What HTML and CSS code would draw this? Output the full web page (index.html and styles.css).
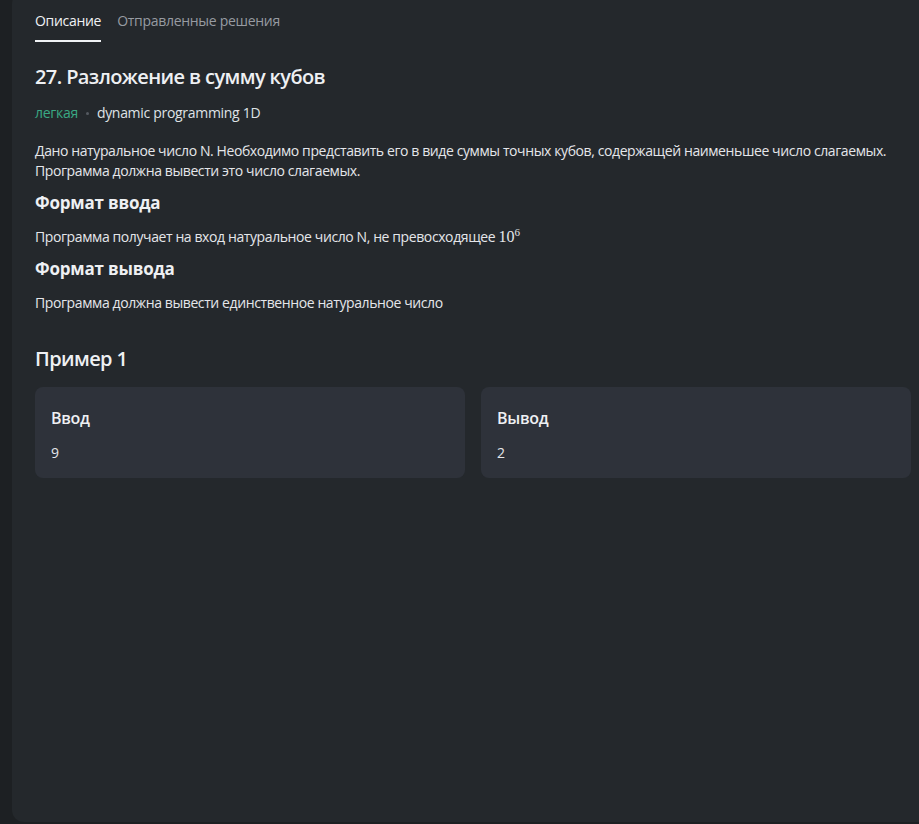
FILE: index.html
```html
<!DOCTYPE html>
<html lang="ru">
<head>
<meta charset="utf-8">
<link rel="stylesheet" href="styles.css">
</head>
<body>
<div class="panel">
  <nav class="tabs">
    <span class="tab active">Описание</span>
    <span class="tab">Отправленные решения</span>
  </nav>
  <h1 class="title">27. Разложение в сумму кубов</h1>
  <div class="tags">
    <span class="level">легкая</span>
    <span class="dot"></span>
    <span class="tag">dynamic programming 1D</span>
  </div>
  <p class="text intro">Дано натуральное число N. Необходимо представить его в виде суммы точных кубов, содержащей наименьшее число слагаемых. Программа должна вывести это число слагаемых.</p>
  <h2 class="section">Формат ввода</h2>
  <p class="text">Программа получает на вход натуральное число N, не превосходящее <span class="math">10<sup>6</sup></span></p>
  <h2 class="section">Формат вывода</h2>
  <p class="text">Программа должна вывести единственное натуральное число</p>
  <h2 class="example">Пример 1</h2>
  <div class="cards">
    <div class="card">
      <div class="card-title">Ввод</div>
      <div class="card-value">9</div>
    </div>
    <div class="card">
      <div class="card-title">Вывод</div>
      <div class="card-value">2</div>
    </div>
  </div>
</div>
</body>
</html>
```
FILE: styles.css
```css
html, body {
  margin: 0;
  padding: 0;
  background: #1d2023;
  height: 100%;
  overflow: hidden;
}
body {
  font-family: "Open Sans", "Noto Sans", sans-serif;
  color: #e4e6ea;
}
.panel {
  margin: -8px 0 0 12px;
  height: 830px;
  box-sizing: border-box;
  background: #24282c;
  border-radius: 12px 0 0 12px;
  padding: 19px 8px 0 23px;
}
.tabs {
  display: flex;
  gap: 16px;
  height: 31px;
}
.tab {
  font-size: 14px;
  line-height: 20px;
  color: #979ba2;
  letter-spacing: -0.3px;
  height: 20px;
  padding-bottom: 9px;
}
.tab.active {
  color: #f0f2f5;
  border-bottom: 2px solid #f0f2f5;
}
.title {
  margin: 21px 0 0;
  font-size: 20px;
  line-height: 28px;
  font-weight: 600;
  letter-spacing: -0.6px;
  color: #eef0f3;
}
.tags {
  display: flex;
  align-items: center;
  margin-top: 12px;
  font-size: 14px;
  line-height: 20px;
  letter-spacing: -0.3px;
}
.level { color: #3aa984; }
.dot {
  width: 3px;
  height: 3px;
  border-radius: 50%;
  background: #555a61;
  margin: 0 8px;
}
.tag { color: #dfe2e6; }
.text {
  margin: 11px 0 0;
  font-size: 14px;
  line-height: 20px;
  letter-spacing: -0.4px;
  color: #e4e6ea;
  max-width: 870px;
}
.text.intro { margin-top: 18px; }
.math {
  font-family: "Liberation Serif", serif;
  font-size: 16px;
  letter-spacing: 0;
}
.math sup {
  font-size: 11px;
  vertical-align: 6px;
  line-height: 0;
}
.section {
  margin: 10px 0 0;
  font-size: 17px;
  line-height: 24px;
  font-weight: 700;
  letter-spacing: -0.2px;
  color: #eef0f3;
}
.section + .text { margin-top: 12px; }
.example {
  margin: 32px 0 0;
  font-size: 20px;
  line-height: 28px;
  font-weight: 600;
  letter-spacing: -0.6px;
  color: #eef0f3;
}
.cards {
  display: grid;
  grid-template-columns: 1fr 1fr;
  gap: 16px;
  margin-top: 14px;
}
.card {
  background: #2e323a;
  border-radius: 8px;
  padding: 20px 16px 16px;
  height: 91px;
  box-sizing: border-box;
}
.card-title {
  font-size: 16px;
  line-height: 22px;
  font-weight: 600;
  color: #eef0f3;
  letter-spacing: -0.3px;
}
.card-value {
  margin-top: 14px;
  font-size: 14px;
  line-height: 20px;
  color: #e4e6ea;
}
```
